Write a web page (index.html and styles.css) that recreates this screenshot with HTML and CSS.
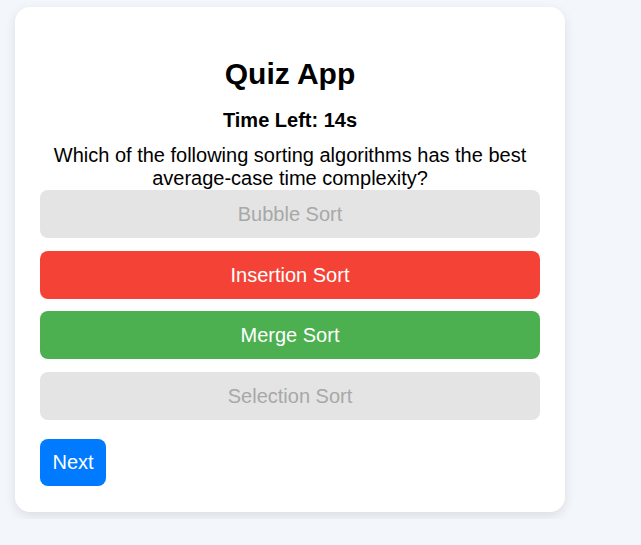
FILE: index.html
```html
<!DOCTYPE html>
<html lang="en">
<head>
<meta charset="utf-8">
<title>Quiz App</title>
<link rel="stylesheet" href="styles.css">
</head>
<body>
  <div class="card">
    <h1 class="title">Quiz App</h1>
    <h3 class="timer">Time Left: 14s</h3>
    <p class="question">Which of the following sorting algorithms has the best average-case time complexity?</p>
    <div class="options">
      <button class="option disabled">Bubble Sort</button>
      <button class="option wrong">Insertion Sort</button>
      <button class="option correct">Merge Sort</button>
      <button class="option disabled">Selection Sort</button>
    </div>
    <button class="next">Next</button>
  </div>
</body>
</html>
```

FILE: styles.css
```css
html, body {
  margin: 0;
  background: #f3f6fa;
}
body {
  padding: 7px 15px;
  font-family: "Liberation Sans", Arial, sans-serif;
  color: #000;
}
.card {
  width: 500px;
  padding: 25px 25px 26px;
  background: #fff;
  border-radius: 15px;
  box-shadow: 0 4px 12px rgba(0, 0, 0, 0.1);
  text-align: center;
}
.title {
  font-size: 30px;
  font-weight: bold;
  margin: 25px 0 0;
}
.timer {
  font-size: 20px;
  font-weight: bold;
  margin: 18px 0 12px;
}
.question {
  font-size: 20px;
  margin: 0;
}
.options {
  display: flex;
  flex-direction: column;
  gap: 12.7px;
}
.option {
  display: block;
  width: 100%;
  border: none;
  border-radius: 8px;
  padding: 12px 0;
  font-family: inherit;
  font-size: 20px;
  line-height: 24px;
  color: #fff;
  cursor: pointer;
}
.option.disabled {
  background: #e4e4e4;
  color: #a8a8a8;
}
.option.wrong {
  background: #f44336;
}
.option.correct {
  background: #4caf50;
}
.next {
  display: block;
  margin-top: 19px;
  border: none;
  border-radius: 8px;
  padding: 12px 12.5px;
  background: #007bff;
  color: #fff;
  font-family: inherit;
  font-size: 20px;
  line-height: 23px;
  cursor: pointer;
}
```
